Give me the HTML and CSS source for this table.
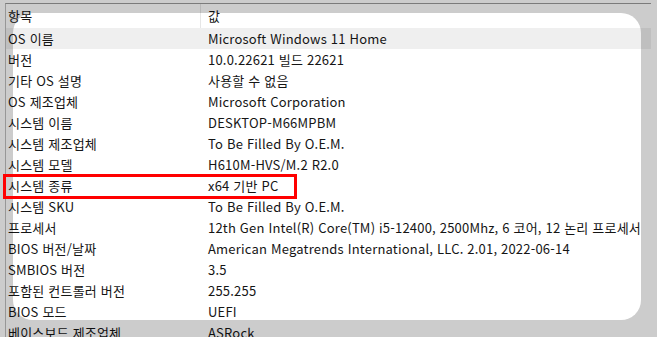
FILE: index.html
```html
<!DOCTYPE html>
<html lang="ko">
<head>
<meta charset="utf-8">
<link rel="stylesheet" href="styles.css">
</head>
<body>
<div class="screen">
  <div class="window">
    <div class="list">
      <div class="row header"><div class="c1">항목</div><div class="c2">값</div></div>
      <div class="row selected"><div class="c1">OS 이름</div><div class="c2">Microsoft Windows 11 Home</div></div>
      <div class="row"><div class="c1">버전</div><div class="c2">10.0.22621 빌드 22621</div></div>
      <div class="row"><div class="c1">기타 OS 설명</div><div class="c2">사용할 수 없음</div></div>
      <div class="row"><div class="c1">OS 제조업체</div><div class="c2">Microsoft Corporation</div></div>
      <div class="row"><div class="c1">시스템 이름</div><div class="c2">DESKTOP-M66MPBM</div></div>
      <div class="row"><div class="c1">시스템 제조업체</div><div class="c2">To Be Filled By O.E.M.</div></div>
      <div class="row"><div class="c1">시스템 모델</div><div class="c2">H610M-HVS/M.2 R2.0</div></div>
      <div class="row"><div class="c1">시스템 종류</div><div class="c2">x64 기반 PC</div></div>
      <div class="row"><div class="c1">시스템 SKU</div><div class="c2">To Be Filled By O.E.M.</div></div>
      <div class="row"><div class="c1">프로세서</div><div class="c2">12th Gen Intel(R) Core(TM) i5-12400, 2500Mhz, 6 코어, 12 논리 프로세서</div></div>
      <div class="row"><div class="c1">BIOS 버전/날짜</div><div class="c2">American Megatrends International, LLC. 2.01, 2022-06-14</div></div>
      <div class="row"><div class="c1">SMBIOS 버전</div><div class="c2">3.5</div></div>
      <div class="row"><div class="c1">포함된 컨트롤러 버전</div><div class="c2">255.255</div></div>
      <div class="row"><div class="c1">BIOS 모드</div><div class="c2">UEFI</div></div>
      <div class="row"><div class="c1">베이스보드 제조업체</div><div class="c2">ASRock</div></div>
    </div>
  </div>
  <div class="spotlight"></div>
  <div class="mark"></div>
</div>
</body>
</html>
```

FILE: styles.css
```css
html, body {
  margin: 0;
  padding: 0;
  background: #ffffff;
}
.screen {
  position: relative;
  width: 657px;
  height: 337px;
  overflow: hidden;
  padding-top: 3px;
  box-sizing: border-box;
  font-family: "Noto Sans CJK KR", "Noto Sans", sans-serif;
  font-size: 13px;
  letter-spacing: 0.2px;
  color: #151515;
}
.window {
  margin-left: 5px;
  width: 645px;
  height: 400px;
  border-top: 1px solid #9a9a9a;
  border-left: 1px solid #bdbdbd;
  background: #fff;
}
.list {
  display: flex;
  flex-direction: column;
}
.row {
  display: flex;
  height: 21px;
  line-height: 21px;
  white-space: nowrap;
}
.row.header {
  height: 24px;
  line-height: 24px;
}
.row.selected {
  background: #efefef;
}
.c1 {
  width: 195px;
  padding-left: 2px;
  box-sizing: border-box;
}
.c2 {
  padding-left: 7px;
}
.header .c1 {
  border-right: 1px solid #e6e6e6;
}
.spotlight {
  position: absolute;
  left: 13px;
  top: 13px;
  width: 628px;
  height: 307px;
  border-radius: 20px;
  box-shadow: 0 0 0 1200px rgba(0, 0, 0, 0.2);
}
.mark {
  position: absolute;
  left: 3px;
  top: 174px;
  width: 288px;
  height: 19px;
  border: 3px solid #f00;
}
```
